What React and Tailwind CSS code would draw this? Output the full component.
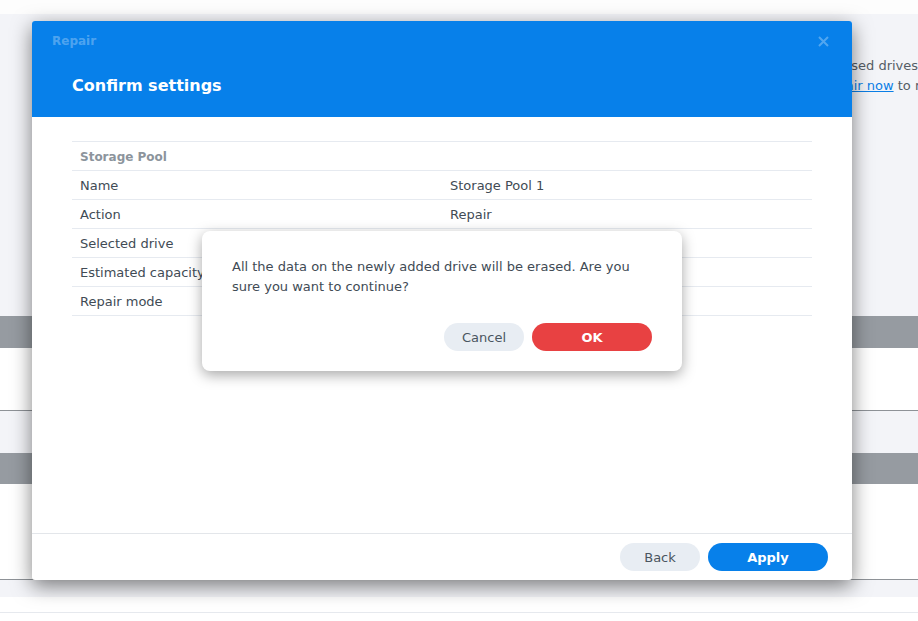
import React from "react";

const font = { fontFamily: '"DejaVu Sans", Verdana, sans-serif' };

function Row({ label, value, head }) {
  return (
    <div className="grid grid-cols-2 h-[29px] pt-[2px] border-b border-[#e6eaf0] items-center">
      <div className={head ? "px-2 text-[12px] font-bold text-[#8c949c]" : "px-2 text-[13px] text-[#414b55]"}>{label}</div>
      <div className="px-2 text-[13px] text-[#414b55]">{value}</div>
    </div>
  );
}

export default function App() {
  return (
    <div className="relative w-[918px] h-[621px] overflow-hidden bg-white" style={font}>
      {/* background page */}
      <div className="flex flex-col">
        <div className="h-[14px] bg-[#fdfdfd]" />
        <div className="h-[302px] bg-[#f3f4f8] pt-[42px] text-[13px] leading-[20px] text-[#555d66] whitespace-nowrap">
          <div className="ml-[843px]">used drives are available</div>
          <div className="ml-[821px]">
            <span className="text-[#0a7ee6] underline">Repair now</span> to repair
          </div>
        </div>
        <div className="h-[32px] bg-[#969ba1]" />
        <div className="h-[63px] bg-white border-b border-[#8e9297]" />
        <div className="h-[42px] bg-[#f3f4f8]" />
        <div className="h-[31px] bg-[#969ba1]" />
        <div className="h-[96px] bg-white border-b border-[#8e9297]" />
        <div className="h-[17px] bg-[#f3f4f8]" />
        <div className="h-[16px] bg-white border-b border-[#e6e9ee]" />
      </div>

      {/* main dialog */}
      <div className="absolute left-[32px] top-[21px] w-[820px] h-[559px] bg-white rounded-[3px] flex flex-col shadow-[0_6px_20px_rgba(0,0,0,0.5)] overflow-hidden">
        <div className="h-[96px] bg-[#0780ea] relative shrink-0">
          <div className="absolute left-[20px] top-[12px] text-[12px] font-bold leading-[16px] text-white/30">Repair</div>
          <svg className="absolute right-[23px] top-[15px]" width="11" height="11" viewBox="0 0 11 11">
            <path d="M1 1 L10 10 M10 1 L1 10" stroke="rgba(255,255,255,0.3)" strokeWidth="2" />
          </svg>
          <div className="absolute left-[40px] top-[54px] text-[16px] font-bold leading-[22px] text-white">Confirm settings</div>
        </div>
        <div className="flex-1 px-[40px] pt-[24px]">
          <div className="border-t border-[#e6eaf0]">
            <Row head label="Storage Pool" value="" />
            <Row label="Name" value="Storage Pool 1" />
            <Row label="Action" value="Repair" />
            <Row label="Selected drive" value="" />
            <Row label="Estimated capacity" value="" />
            <Row label="Repair mode" value="" />
          </div>
        </div>
        <div className="h-[47px] border-t border-[#e3e6ea] flex justify-end items-start pt-[9px] pr-[24px] gap-[8px] shrink-0">
          <button className="w-[80px] h-[28px] pt-[2px] rounded-full bg-[#e8edf3] text-[13px] text-[#4a5560]">Back</button>
          <button className="w-[120px] h-[28px] pt-[2px] rounded-full bg-[#0780ea] text-[13px] font-bold text-white">Apply</button>
        </div>
      </div>

      {/* confirmation popup */}
      <div className="absolute left-[202px] top-[231px] w-[480px] h-[140px] bg-white rounded-[8px] shadow-[0_4px_14px_rgba(0,0,0,0.35)] px-[30px] pt-[26px] flex flex-col">
        <p className="text-[13px] leading-[20px] text-[#414b55]">
          All the data on the newly added drive will be erased. Are you sure you want to continue?
        </p>
        <div className="flex justify-end gap-[8px] mt-[26px]">
          <button className="w-[80px] h-[28px] pt-[2px] rounded-full bg-[#e8edf3] text-[13px] text-[#4a5560]">Cancel</button>
          <button className="w-[120px] h-[28px] pt-[2px] rounded-full bg-[#e84142] text-[13px] font-bold text-white">OK</button>
        </div>
      </div>
    </div>
  );
}
